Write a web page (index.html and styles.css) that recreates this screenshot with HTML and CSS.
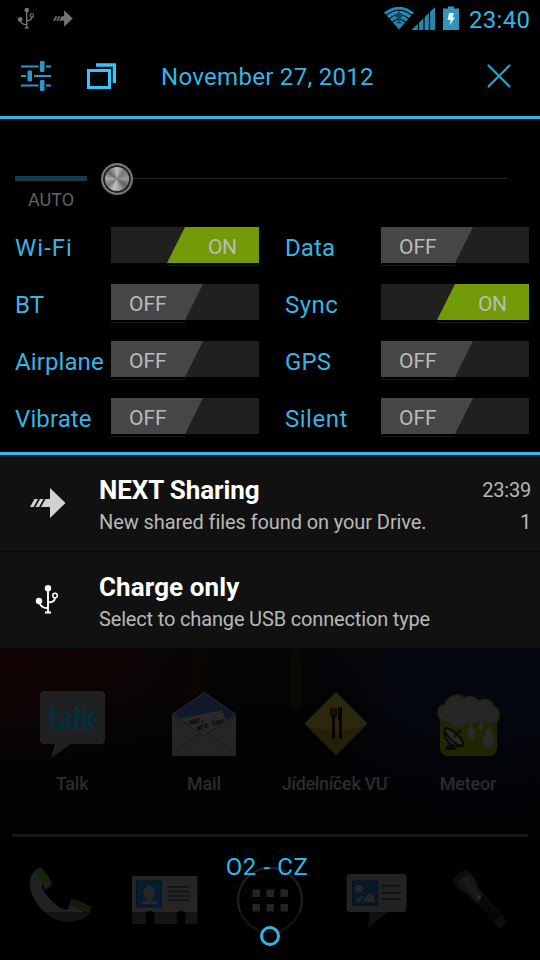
FILE: index.html
```html
<!DOCTYPE html>
<html lang="en">
<head>
<meta charset="utf-8">
<title>Notification shade</title>
<link rel="stylesheet" href="styles.css">
</head>
<body>
<svg class="defs" width="0" height="0" aria-hidden="true">
  <symbol id="usb" viewBox="0 0 24 30">
    <circle cx="13" cy="4.200" r="3.200" fill="currentColor"/>
    <circle cx="4" cy="17" r="3.200" fill="currentColor"/>
    <circle cx="20" cy="11.500" r="2.300" fill="none" stroke="currentColor" stroke-width="1.500"/>
    <path d="M13 4V28M10 28.500H16M4 17C4.500 21.500 8 24 13 24.300M20 13.500C20 17 17 18.500 13 18.500" fill="none" stroke="currentColor" stroke-width="1.900"/>
  </symbol>
  <symbol id="share" viewBox="0 0 36 30">
    <path d="M20 0L35.500 15L20 30V19H13L18 11H20ZM4.500 11H8L3.500 19H0ZM10 11H13.500L9 19H5.500ZM15.500 11H20V19H11Z" fill="currentColor"/>
  </symbol>
</svg>
<div class="phone">
  <header class="status">
    <svg class="status-usb"><use href="#usb"/></svg>
    <svg class="status-share"><use href="#share"/></svg>
    <svg class="signals" viewBox="0 0 76 26">
      <path d="M0 6.500Q15 -5 30 6.500L15 23.500Z" fill="#2687b0"/>
      <g fill="none" stroke="#000" stroke-width="1.100">
        <path d="M2 9.500Q15 -1 28 9.500M5 13Q15 4 25 13M8 16.500Q15 10 22 16.500"/>
      </g>
      <path d="M15 5L19 10L15 14L11 10Z M15 14L18 17.500H12Z" fill="#0f4a64"/>
      <path d="M27.500 24L51 1V24Z" fill="#2687b0"/>
      <path d="M34.500 0V24M40 0V24M45.500 0V24" stroke="#000" stroke-width="1.200"/>
      <path d="M59 2.500H64V.500H70V2.500H75V24H59Z" fill="#3393bb"/>
      <path d="M65 7H70L68.500 11.500H71L65.500 19.500L66.800 14H63.500Z" fill="#eaf4f8"/>
    </svg>
    <time class="clock">23:40</time>
  </header>
  <section class="datebar">
    <svg class="sliders" viewBox="0 0 30 30" stroke="#2b98c6" stroke-width="1.800">
      <path d="M0 5.500H17.500M25 5.500H30M0 15H5M13 15H30M0 24.500H17.500M25 24.500H30"/>
      <g fill="#2b98c6" stroke="none"><rect x="19" width="4.500" height="11" rx="1"/><rect x="6.500" y="9.500" width="4.500" height="11" rx="1"/><rect x="19" y="19" width="4.500" height="11" rx="1"/></g>
    </svg>
    <svg class="windows" viewBox="0 0 29 26" fill="none" stroke="#33c5ff">
      <rect x="1.500" y="7.500" width="21" height="17" stroke-width="3"/>
      <path d="M9 2H27.500V20" stroke-width="3.500"/>
    </svg>
    <span class="date">November 27, 2012</span>
    <svg class="close" viewBox="0 0 24 24"><path d="M1.500 1.500L22.500 22.500M22.500 1.500L1.500 22.500" stroke="#2b9fcf" stroke-width="2.200" stroke-linecap="round"/></svg>
  </section>
  <section class="panel">
    <div class="brightness">
      <div class="auto"><i></i><span>AUTO</span></div>
      <div class="seek"><b class="knob"></b></div>
    </div>
    <div class="toggles">
      <label class="wide">Wi-Fi</label><div class="switch on"><span>ON</span></div>
      <label>Data</label><div class="switch"><span>OFF</span></div>
      <label>BT</label><div class="switch"><span>OFF</span></div>
      <label class="loose">Sync</label><div class="switch on"><span>ON</span></div>
      <label>Airplane</label><div class="switch"><span>OFF</span></div>
      <label>GPS</label><div class="switch"><span>OFF</span></div>
      <label>Vibrate</label><div class="switch"><span>OFF</span></div>
      <label class="loose">Silent</label><div class="switch"><span>OFF</span></div>
    </div>
  </section>
  <article class="note">
    <div class="note-icon"><svg class="note-share"><use href="#share"/></svg></div>
    <div class="note-text"><h2>NEXT Sharing</h2><p>New shared files found on your Drive.</p></div>
    <div class="note-meta"><time>23:39</time><span>1</span></div>
  </article>
  <article class="note">
    <div class="note-icon"><svg class="note-usb"><use href="#usb"/></svg></div>
    <div class="note-text"><h2 class="spaced">Charge only</h2><p class="tight">Select to change USB connection type</p></div>
  </article>
  <main class="home">
    <div class="apps">
      <div class="app">
        <svg viewBox="0 0 72 72"><path d="M8 3H65Q69 3 69 7V52Q69 56 65 56H35L15 70L19 56H8Q4 56 4 52V7Q4 3 8 3Z" fill="#202022"/><text x="12" y="41" textLength="48" lengthAdjust="spacingAndGlyphs" class="talk">talk</text></svg>
        <span>Talk</span>
      </div>
      <div class="app">
        <svg viewBox="0 0 72 72">
          <path d="M4 26L36.500 4L68 26V68H4Z" fill="#252525"/>
          <path d="M6 26L36.500 5.500L66 26L36 48Z" fill="#11182b"/>
          <path d="M11 31L54 22L58 33L36 48Z" fill="#292929"/>
          <text x="21" y="37" class="letter" transform="rotate(-15 21 37)">ear,</text>
          <text x="29" y="43" class="letter" transform="rotate(-17 29 43)">are You</text>
          <path d="M4 26L36 48L68 26V68H4Z" fill="#252525"/>
          <path d="M7 65L31 46M65 65L41 46M5 27L36 48L67 27" fill="none" stroke="#191919"/>
        </svg>
        <span>Mail</span>
      </div>
      <div class="app">
        <svg viewBox="0 0 72 72">
          <path d="M36 4L67.500 35.500L36 67L4.500 35.500Z" fill="#2b260c"/><path d="M7 38Q36 48 65 38L36 67Z" fill="#241f08"/>
          <path d="M31 20V26Q31 29 33.500 29Q36 29 36 26V20M33.500 20V50" fill="none" stroke="#060500" stroke-width="1.600"/><path d="M33.500 30V49.500M40.500 22V49.500" stroke="#060500" stroke-width="3" stroke-linecap="round"/><path d="M38 21Q38 19 42 19V32H38Z" fill="#060500"/>
        </svg>
        <span class="cut">Jídelníček VU<i></i></span>
      </div>
      <div class="app">
        <svg viewBox="0 0 72 72">
          <path d="M8 32H65V59Q65 68 56 68H17Q8 68 8 59Z" fill="#202602"/>
          <g fill="#262627" stroke="#202602" stroke-width="4" paint-order="stroke">
            <path d="M13 33C4 28 6 17 14 18C16 7 28 6 32 12C38 8 44 10 46 15C54 9 61 15 60 19C68 20 68 33 60 35C55 37 49 35 47 33C42 38 37 36 35 34C29 43 18 39 18 34Z"/>
          </g>
          <path d="M39 35Q35 44 35 47Q35 52 39 52Q43.500 52 43.500 47Q43.500 42 39 35ZM49 33Q46.500 39 47 41Q49 44 51.500 41Q52 38 49 33ZM57 37Q50 51 50.500 56Q52 60 56 60Q61 60 62 55Q62 49 57 37Z" fill="#292a29"/>
          <path d="M13 41L31 57Q25 61 17 55Q11 49 13 41Z" fill="#292a29" stroke="#090b01" stroke-width="2"/>
          <ellipse cx="22" cy="49" rx="12" ry="4" transform="rotate(43 22 49)" fill="#292a29" stroke="#090b01" stroke-width="2"/><path d="M22 49L29 42" stroke="#090b01" stroke-width="2"/><path d="M13 62Q13 57 18 57L24 60V62Z" fill="#090b01"/>
        </svg>
        <span>Meteor</span>
      </div>
    </div>
    <hr>
    <div class="dock">
      <svg viewBox="0 0 72 72">
        <path d="M11 8C5 14 5 25 13 38C23 54 38 60 52 57C60 56 65 52 68 47L49 35Q46 40 45 45Q41 46 36 43Q25 35 19 24Q18 19 26 14L18 4Z" fill="#212121"/>
        <path d="M11 7Q15 3 19 4Q27 13 29 21L22 26Q18 14 11 7Z" fill="#16240c"/><path d="M47 36Q52 33 68 43L65 52Q59 45 47 42Z" fill="#111c0a"/>
      </svg>
      <svg viewBox="0 0 72 72">
        <path d="M4 12H69.500V48H4Z" fill="#252525"/><path d="M4 48H69.500V60H57V53A4.500 4.500 0 1 0 49 53V60H26V53A4.500 4.500 0 1 0 18 53V60H4Z" fill="#222"/>
        <circle cx="22" cy="51.500" r="4.500" fill="#020202"/><circle cx="53" cy="51.500" r="4.500" fill="#020202"/>
        <rect x="8.500" y="17" width="25" height="26" fill="#081c30" stroke="#05111f"/><path d="M13 40Q14 37 19 36Q14 31 16 25Q21 18 26 25Q28 31 23 36Q29 37 30 40Z" fill="#262626"/>
        <path d="M39.500 23H61.500M39.500 27.500H61.500M39.500 32H61.500M39.500 36H61.500" stroke="#171717" stroke-width="1.800"/>
      </svg>
      <svg viewBox="0 0 72 72">
        <circle cx="36" cy="36" r="32" fill="none" stroke="#1e1e1e" stroke-width="2.300"/>
        <path d="M18.500 25.500h7.500v7.500h-7.500zM32.500 25.500h7.500v7.500h-7.500zM46.500 25.500h7.500v7.500h-7.500zM18.500 40h7.500v7.500h-7.500zM32.500 40h7.500v7.500h-7.500zM46.500 40h7.500v7.500h-7.500z" fill="#242424"/>
      </svg>
      <svg viewBox="0 0 72 72">
        <rect x="6.500" y="10" width="60" height="38" rx="3" fill="#222"/><path d="M30 48H48L28 64Z" fill="#1c1c1c"/>
        <rect x="12.500" y="17" width="25" height="24" fill="#061829" stroke="#04101b"/><circle cx="19" cy="24.500" r="4" fill="#252525"/><path d="M15 38Q17 32 24 32L20 38ZM23 38Q25 31 30 29Q35 30 35 38Z" fill="#252525"/>
        <path d="M41.500 22H61.500M41.500 29H61.500M41.500 35H61.500" stroke="#151515" stroke-width="2"/>
      </svg>
      <svg viewBox="0 0 72 72">
        <defs><linearGradient id="torch" gradientUnits="userSpaceOnUse" x1="14" y1="25" x2="31" y2="12"><stop offset="0" stop-color="#0b0b0b"/><stop offset=".5" stop-color="#1c1c1c"/><stop offset="1" stop-color="#0d0d0d"/></linearGradient></defs>
        <path d="M8 16Q13 8 23 7L31 16L33 24L61 56Q60 63 54 64L24 31L14 25Z" fill="url(#torch)"/><path d="M7 17Q12 7 22 6L25 11Q14 14 10 21Z" fill="#0d0d0d"/><path d="M38 31L56 51L49 58L32 40Z" fill="#090909"/><circle cx="34" cy="33" r="1.800" fill="#2d2d2d"/>
      </svg>
    </div>
    <div class="navshade"></div>
    <div class="carrier">O2 - CZ</div>
    <div class="handle"></div>
  </main>
</div>
</body>
</html>
```
FILE: styles.css
```css
* { box-sizing: border-box; }
body { margin: 0; background: #000; font-family: Roboto, "Liberation Sans", sans-serif; }
svg { display: block; flex: none; }
.defs { position: absolute; }
.phone { width: 540px; height: 960px; display: flex; flex-direction: column; overflow: hidden; background: #000; }

.status { height: 38px; display: flex; align-items: flex-start; padding-left: 17px; color: #747474; }
.status-usb { width: 18px; height: 22px; margin-top: 7px; }
.status-share { width: 20px; height: 17px; margin: 10px 0 0 18px; }
.signals { width: 76px; height: 26px; margin: 6px 0 0 311px; }
.clock { margin: 6px 0 0 9px; font-size: 24px; line-height: 28px; letter-spacing: .3px; color: #33b5e5; }

.datebar { height: 81px; display: flex; align-items: center; padding: 0 0 2px 21px; border-bottom: 3px solid #33b5e5; }
.sliders { width: 30px; height: 30px; }
.windows { width: 29px; height: 26px; margin-left: 36px; }
.date { width: 322px; margin-left: 45px; padding-top: 2px; font-size: 24px; line-height: 28px; letter-spacing: .3px; color: #33b5e5; }
.close { width: 24px; height: 24px; margin-left: 4px; }

.panel { height: 336px; padding-left: 15px; border-bottom: 3px solid #33b5e5; }
.brightness { display: flex; height: 103px; padding-top: 57px; }
.auto { width: 72px; font-size: 18px; line-height: 22px; color: #626262; text-align: center; }
.auto i { display: block; height: 5px; margin-bottom: 8px; background: #133c4b; }
.seek { display: flex; align-items: center; width: 406px; height: 32px; margin: -13px 0 0 14px; background: linear-gradient(#262626, #262626) 16px 15px / 390px 1px no-repeat; }
.knob { width: 32px; height: 32px; border: 2px solid #777; border-radius: 50%; background: conic-gradient(#bbb, #777 12%, #999 25%, #606060 35%, #aaa 48%, #c0c0c0 55%, #777 65%, #aaa 76%, #666 86%, #bbb); box-shadow: inset 0 0 0 2px #222; }
.toggles { display: grid; grid-template-columns: 96px 174px 96px 148px; grid-auto-rows: 57px; padding-top: 2px; }
.toggles label { padding-top: 3px; font-size: 24px; line-height: 42px; letter-spacing: .1px; color: #33b5e5; white-space: nowrap; }
.toggles .wide { letter-spacing: 1px; }
.toggles .loose { letter-spacing: .5px; }
.switch { width: 148px; height: 39px; margin-top: 3px; background: linear-gradient(#202020, #202020) 0 0 / 100% 36px no-repeat, linear-gradient(#191919, #191919) 0 38px / 74px 1px no-repeat; font-size: 21px; line-height: 41px; color: #bababa; }
.switch span { display: block; width: 92px; height: 36px; padding-left: 18px; background: #464646; clip-path: polygon(0 0, 100% 0, 74px 100%, 0 100%); }
.switch.on { background: linear-gradient(#202020, #202020) 0 0 / 100% 36px no-repeat, linear-gradient(#191919, #191919) 56px 38px / 92px 1px no-repeat; }
.switch.on span { margin-left: 56px; padding-left: 41px; letter-spacing: -.5px; background: #739b08; clip-path: polygon(18px 0, 100% 0, 100% 100%, 0 100%); }

.note { display: flex; height: 97px; background: #111; border-bottom: 1px solid #060606; }
.note-icon { width: 96px; height: 96px; display: grid; place-items: center; color: #d2d2d2; }
.note-share { width: 36px; height: 30px; }
.note-usb { width: 24px; height: 30px; margin: -3px 0 0 -3px; color: #fff; }
.note-text { flex: 1; padding: 19px 0 0 3px; }
.note h2 { margin: 0; font-size: 26px; line-height: 32px; font-weight: 700; color: #fff; letter-spacing: -.1px; }
.note h2.spaced { letter-spacing: .1px; }
.note p { margin: 4px 0 0; font-size: 20px; line-height: 24px; letter-spacing: -.09px; color: #b8b8b8; white-space: nowrap; }
.note p.tight { letter-spacing: -.16px; }
.note-meta { display: flex; flex-direction: column; align-items: flex-end; padding: 23px 9px 0 0; font-size: 20px; line-height: 24px; letter-spacing: -.2px; color: #b8b8b8; }
.note-meta span { margin-top: 8px; }

.home { position: relative; flex: 1; overflow: hidden; background: radial-gradient(ellipse 250px 130px at 0 0, #140303, transparent), radial-gradient(ellipse 190px 170px at 480px 0, #030814, transparent), linear-gradient(90deg, transparent 180px, #090502 195px, transparent 208px, transparent 290px, #0a0803 292px, #0a0803 299px, transparent 302px) 0 0 / 100% 60px no-repeat, linear-gradient(#040404, #010204 50%, #000); }
.apps { display: grid; grid-template-columns: repeat(4, 132px); padding: 39px 6px 0; height: 185px; }
.app { display: flex; flex-direction: column; align-items: center; font-size: 18px; line-height: 22px; font-weight: 500; letter-spacing: -.2px; color: #2b2b2b; white-space: nowrap; }
.app svg { width: 72px; height: 72px; }
.app span { margin-top: 13px; }
.app .cut { letter-spacing: -.35px; }
.cut i { display: inline-block; width: 3px; height: 1px; vertical-align: 12px; background: #222; }
.talk { font: 700 31px "Open Sans", sans-serif; fill: #04303e; }
.letter { font: 700 8px "Liberation Mono", monospace; fill: #080808; letter-spacing: -.8px; }
hr { height: 3px; margin: 0 12px; border: 0; background: #181818; }
.dock { display: grid; grid-template-columns: repeat(5, 1fr); justify-items: center; margin: 27px 6px 0; }
.dock svg { width: 72px; height: 72px; }
.navshade { position: absolute; left: 0; right: 0; bottom: 0; height: 48px; background: rgba(0, 0, 0, .4); }
.carrier { position: absolute; top: 204px; left: 0; width: 534px; font-size: 24px; line-height: 28px; letter-spacing: .6px; text-align: center; color: #33b5e5; }
.handle { position: absolute; top: 277px; left: 260px; width: 20px; height: 20px; border: 3px solid #33b5e5; border-radius: 50%; }
```
